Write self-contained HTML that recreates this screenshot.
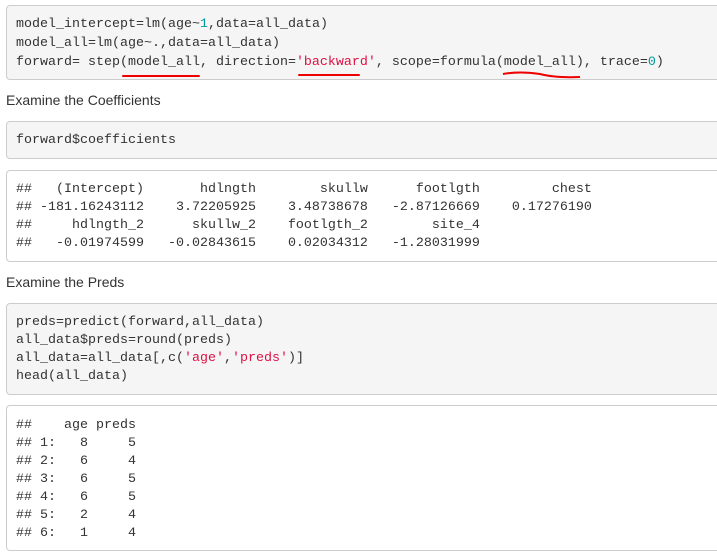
<!DOCTYPE html>
<html><head><style>
html,body{margin:0;padding:0;background:#fff;width:717px;height:555px;overflow:hidden;position:relative}
.b{position:absolute;left:6px;width:730px;border:1px solid #ccc;border-radius:4px;box-sizing:border-box;background:#f5f5f5}
.o{background:#fff}
pre{margin:0;position:absolute;left:9px;font-family:"Liberation Mono",monospace;font-size:13.33px;line-height:18px;color:#333}
.h{position:absolute;left:6px;font-family:"Liberation Sans",sans-serif;font-size:14px;color:#333}
.n{color:#099}.s{color:#d14}
.u{position:absolute;height:2px;background:#e00;border-radius:1px}
</style></head><body>
<div class="b" style="top:5px;height:75px"><pre style="top:9px;line-height:19px">model_intercept=lm(age~<span class="n">1</span>,data=all_data)
model_all=lm(age~.,data=all_data)
forward= step(model_all, direction=<span class="s">'backward'</span>, scope=formula(model_all), trace=<span class="n">0</span>)</pre></div>
<div class="u" style="left:122px;top:75px;width:78px"></div>
<div class="u" style="left:298px;top:74px;width:62px"></div>
<svg style="position:absolute;left:500px;top:71px" width="84" height="10"><path d="M3 3 Q20 0 40 3 Q55 7 80 6" stroke="#e00" stroke-width="2" fill="none"/></svg>
<div class="h" style="top:92px">Examine the Coefficients</div>
<div class="b" style="top:121px;height:38px"><pre style="top:10px">forward$coefficients</pre></div>
<div class="b o" style="top:170px;height:92px"><pre style="top:10px">##   (Intercept)       hdlngth        skullw      footlgth         chest
## -181.16243112    3.72205925    3.48738678   -2.87126669    0.17276190
##     hdlngth_2      skullw_2    footlgth_2        site_4
##   -0.01974599   -0.02843615    0.02034312   -1.28031999</pre></div>
<div class="h" style="top:274px">Examine the Preds</div>
<div class="b" style="top:303px;height:92px"><pre style="top:10px">preds=predict(forward,all_data)
all_data$preds=round(preds)
all_data=all_data[,c(<span class="s">'age'</span>,<span class="s">'preds'</span>)]
head(all_data)</pre></div>
<div class="b o" style="top:405px;height:146px"><pre style="top:11px">##    age preds
## 1:   8     5
## 2:   6     4
## 3:   6     5
## 4:   6     5
## 5:   2     4
## 6:   1     4</pre></div>
</body></html>
